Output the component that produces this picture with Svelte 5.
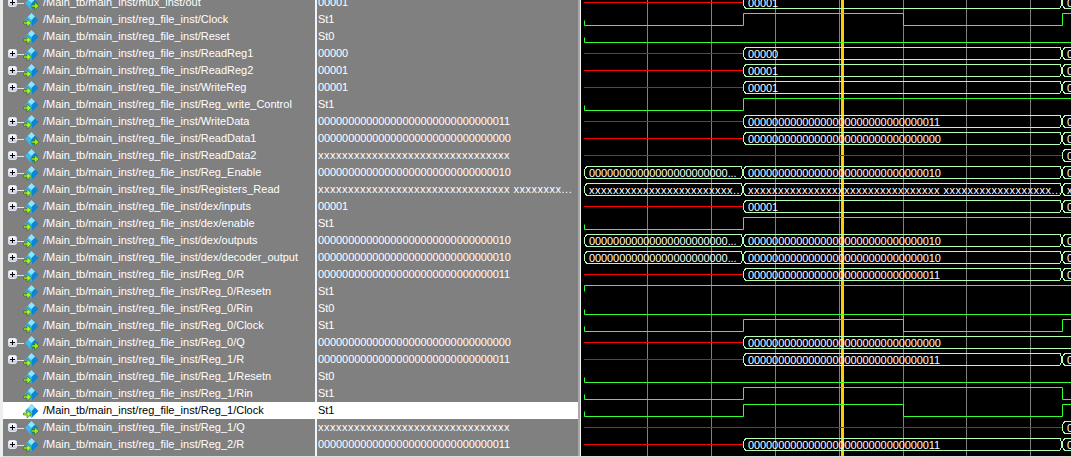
<script>
  const T0 = 584, T1 = 743, T2 = 903, T3 = 1062, END = 1075
  const GRID = [647, 711, 775, 839, 903, 966, 1030]

  const z32 = (tail) => '0'.repeat(32 - tail.length) + tail
  const xs = 'x'.repeat(32)
  const R = '/Main_tb/main_inst/reg_file_inst/'

  // kinds: n = red then bus at T1, x = red then bus at T3, b = bus from start, l = logic
  const rows = [
    { name: '/Main_tb/main_inst/mux_inst/out', val: '00001', w: 'n', out: true },
    { name: R + 'Clock', val: 'St1', w: 'l', lv: [[T0, 0], [T1, 1], [T2, 0], [T3, 1]] },
    { name: R + 'Reset', val: 'St0', w: 'l', lv: [[T0, 0]] },
    { name: R + 'ReadReg1', val: '00000', w: 'n' },
    { name: R + 'ReadReg2', val: '00001', w: 'n' },
    { name: R + 'WriteReg', val: '00001', w: 'n' },
    { name: R + 'Reg_write_Control', val: 'St1', w: 'l', lv: [[T0, 0], [T1, 1]] },
    { name: R + 'WriteData', val: z32('11'), w: 'n' },
    { name: R + 'ReadData1', val: z32('00'), w: 'n', out: true },
    { name: R + 'ReadData2', val: xs, w: 'x', out: true },
    { name: R + 'Reg_Enable', val: z32('10'), w: 'b', first: '0'.repeat(23) + '...' },
    { name: R + 'Registers_Read', val: xs + ' xxxxxxxx...', wave: xs + ' ' + 'x'.repeat(18) + '...', w: 'b', first: 'x'.repeat(24) + '...', fill: 'x' },
    { name: R + 'dex/inputs', val: '00001', w: 'n' },
    { name: R + 'dex/enable', val: 'St1', w: 'l', lv: [[T0, 0], [T1, 1]] },
    { name: R + 'dex/outputs', val: z32('10'), w: 'b', first: '0'.repeat(23) + '...' },
    { name: R + 'dex/decoder_output', val: z32('10'), w: 'b', first: '0'.repeat(23) + '...' },
    { name: R + 'Reg_0/R', val: z32('11'), w: 'n' },
    { name: R + 'Reg_0/Resetn', val: 'St1', w: 'l', lv: [[T0, 1]] },
    { name: R + 'Reg_0/Rin', val: 'St0', w: 'l', lv: [[T0, 0]] },
    { name: R + 'Reg_0/Clock', val: 'St1', w: 'l', lv: [[T0, 0], [T1, 1], [T2, 0], [T3, 1]] },
    { name: R + 'Reg_0/Q', val: z32('00'), w: 'n', hold: true, out: true },
    { name: R + 'Reg_1/R', val: z32('11'), w: 'n' },
    { name: R + 'Reg_1/Resetn', val: 'St0', w: 'l', lv: [[T0, 0]] },
    { name: R + 'Reg_1/Rin', val: 'St1', w: 'l', lv: [[T0, 0], [T1, 1], [T3, 0]] },
    { name: R + 'Reg_1/Clock', val: 'St1', w: 'l', lv: [[T0, 0], [T1, 1], [T2, 0], [T3, 1]], sel: true },
    { name: R + 'Reg_1/Q', val: xs, w: 'x', out: true },
    { name: R + 'Reg_2/R', val: z32('11'), w: 'n' },
  ]

  const mid = (i) => 2 + 17 * i

  // polyline for a std_logic signal, with the small start tick from the unknown level
  function logicPts(lv, c) {
    const y = (v) => (v ? c - 6 : c + 6) + 0.5
    const pts = [`${T0 + 0.5},${lv[0][1] ? c + 0.5 : c + 1.5}`, `${T0 + 0.5},${y(lv[0][1])}`]
    lv.slice(1).forEach(([x, v], i) => {
      pts.push(`${x + 0.5},${y(lv[i][1])}`)
      pts.push(`${x + 0.5},${y(v)}`)
    })
    pts.push(`${END},${y(lv[lv.length - 1][1])}`)
    return pts.join(' ')
  }

  // one pinched cell of a bus value
  function busPath(a, b, c) {
    const t = c - 5.5, u = c + 6.5
    return `M${b - 2} ${t}L${a + 2.5} ${t}L${a + 1.5} ${t + 2}L${a + 0.5} ${t + 3}L${a + 0.5} ${u - 3}L${a + 1.5} ${u - 2}L${a + 2.5} ${u}L${b - 2} ${u}L${b - 1.5} ${u - 2}L${b - 0.5} ${u - 3}L${b - 0.5} ${t + 3}L${b - 1.5} ${t + 2}Z`
  }

  function segs(r) {
    const v = r.wave || r.val
    const last = r.fill || '0'
    if (r.w == 'x') return [{ a: T3, b: END, t: last }]
    if (r.w == 'b') return [{ a: T0, b: T1, t: r.first }, { a: T1, b: T3, t: v }, { a: T3, b: END, t: last }]
    if (r.hold) return [{ a: T1, b: END, t: v }]
    return [{ a: T1, b: T3, t: v }, { a: T3, b: END, t: last }]
  }

  const redEnd = (r) => (r.w == 'x' ? T3 : T1)
  const isX = (t) => t.startsWith('x')
  const isBus = (r) => r.w != 'l'
</script>

<div class="wave-window">
  <div class="list">
    {#each rows as r}
      <div class="row" class:sel={r.sel}>
        <div class="name-cell">
          {#if isBus(r)}
            <span class="plus"></span>
          {/if}
          <svg class="icon" width="17" height="17" viewBox="0 0 17 17">
            <path d="M8.500 2 15.500 9 8.500 16Z" fill="#0a86d6" />
            <path d="M8.500 2 2 9 8.500 16Z" fill="#35bdf2" />
            <path d="M8.500 2 5 5.800 8.500 9 12 5.500Z" fill="#8fe4fb" />
            {#if r.out}
              <path d="M8 11h3.500V8l4.500 4-4.500 4v-3H8Z" fill="#a8e51f" stroke="#1f6b12" stroke-width=".6" />
            {:else}
              <path d="M0.500 11h3.500V8l4.500 4-4.500 4v-3H0.500Z" fill="#b5ee2a" stroke="#1f6b12" stroke-width=".6" />
            {/if}
          </svg>
          <span class="name">{r.name}</span>
        </div>
        <div class="val-cell" class:xval={isX(r.val)}>{r.val}</div>
      </div>
    {/each}
  </div>

  <svg class="waves" width="490" height="456" viewBox="581 0 490 456">
    {#each GRID as x}
      <line x1={x + 0.5} x2={x + 0.5} y1="0" y2="456" class="grid" />
    {/each}
    <rect x="841" y="0" width="3" height="456" fill="#ffcc00" />
    {#each rows as r, i}
      {@const c = mid(i)}
      {#if r.w == 'l'}
        <polyline points={logicPts(r.lv, c)} class="logic" />
      {:else}
        {#if r.w != 'b'}
          <line x1={T0} x2={redEnd(r)} y1={c + 0.5} y2={c + 0.5} class="red" />
        {/if}
        {#each segs(r) as s}
          <path d={busPath(s.a, s.b, c)} class="bus" />
          <text x={s.a + 5} y={c + 5} class="wtext" class:xval={isX(s.t)}>{s.t}</text>
        {/each}
      {/if}
    {/each}
  </svg>
</div>

<style>
  :global(body) {
    margin: 0;
    background: #dcdcdc;
  }

  .wave-window {
    display: flex;
    width: 1071px;
    height: 457px;
    overflow: hidden;
    font-family: "Liberation Sans", Arial, sans-serif;
    font-size: 11px;
    color: #fff;
    border-left: 3px solid #eeeeee;
    box-sizing: border-box;
  }

  .list {
    width: 575px;
    height: 456px;
    background: linear-gradient(#808080, #808080) 0 0 / 312px 100% no-repeat,
      linear-gradient(#808080, #808080) 314px 0 / 264px 100% no-repeat, #f4f4f4;
    overflow: hidden;
    flex: none;
    border-right: 2px solid #a8a8a8;
  }

  .row {
    display: flex;
    height: 17px;
    line-height: 17px;
    white-space: nowrap;
  }

  .row:first-child {
    margin-top: -6px;
  }

  .row.sel {
    background: #fff;
    color: #000;
  }

  .name-cell {
    position: relative;
    width: 314px;
    flex: none;
    padding-left: 40px;
    box-sizing: border-box;
  }

  .plus {
    position: absolute;
    left: 5px;
    top: 4px;
    width: 7px;
    height: 7px;
    border-radius: 2px;
    background:
      linear-gradient(#000, #000) center / 5px 1px no-repeat,
      linear-gradient(#000, #000) center / 1px 5px no-repeat,
      linear-gradient(#fff, #c4cbe0);
    border: 1px solid #dfe3ee;
  }

  .plus::after {
    content: "";
    position: absolute;
    left: 8px;
    top: 4px;
    width: 7px;
    height: 1px;
    background: #e4e4e4;
  }

  .icon {
    position: absolute;
    left: 20px;
    top: 0;
  }

  .val-cell {
    padding-left: 1px;
    letter-spacing: -0.09px;
  }

  .xval {
    letter-spacing: 0.5px;
  }

  .waves {
    display: block;
    flex: none;
    background: #000;
    border-left: 1px solid #f4f4f4;
  }

  .grid {
    stroke: #808080;
  }

  .logic {
    fill: none;
    stroke: #33ff33;
  }

  .red {
    stroke: #ff0000;
  }

  .bus {
    fill: none;
    stroke: #b4ffb4;
    shape-rendering: crispEdges;
  }

  .wtext {
    fill: #fff;
    font-size: 11px;
    letter-spacing: -0.09px;
  }

  .wtext.xval {
    letter-spacing: 0.5px;
  }
</style>
